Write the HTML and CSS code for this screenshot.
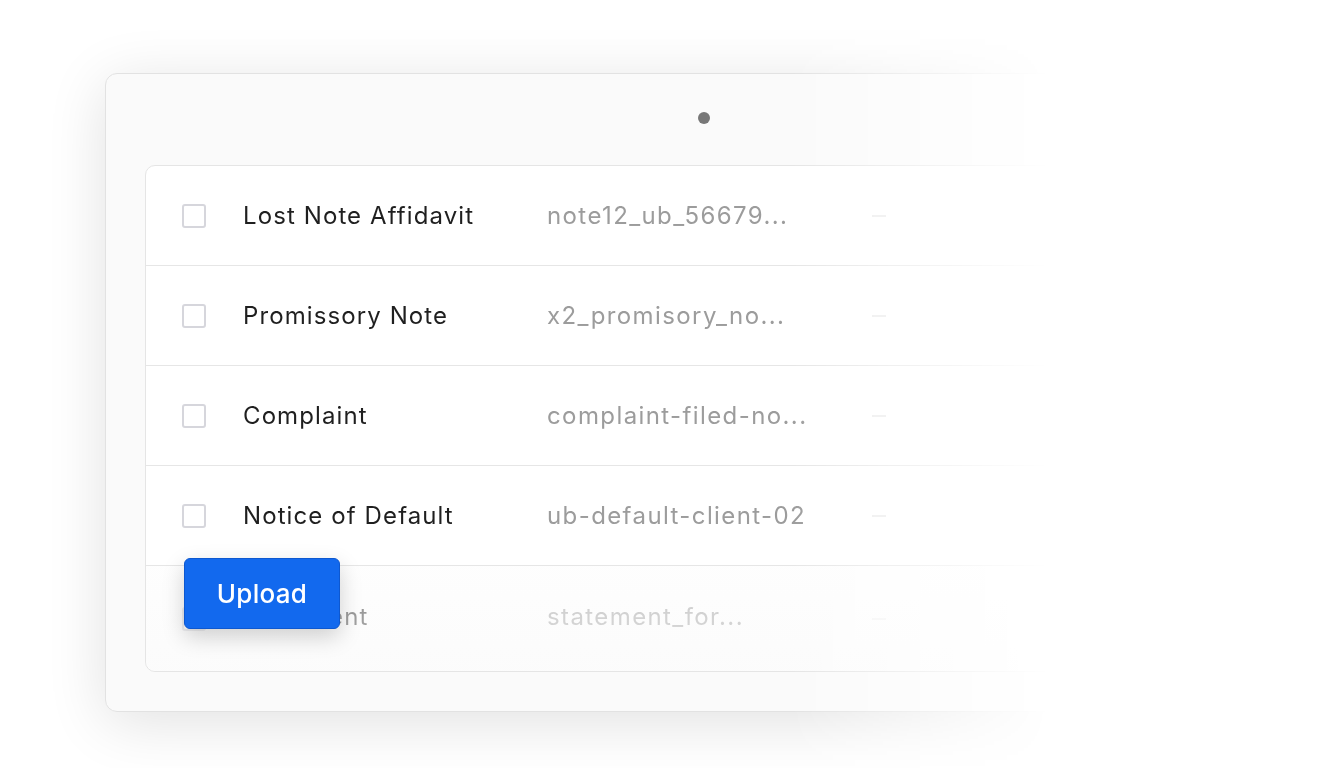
FILE: index.html
```
<!DOCTYPE html>
<html lang="en">
<head>
<meta charset="utf-8">
<title>Documents</title>
<link rel="stylesheet" href="styles.css">
</head>
<body>
<div class="stage">
  <div class="frame">
    <div class="header"><span class="dot"></span></div>
    <div class="table">
      <div class="row">
        <span class="check"></span>
        <span class="title">Lost Note Affidavit</span>
        <span class="file">note12_ub_56679...</span>
        <span class="dash"></span>
      </div>
      <div class="row">
        <span class="check"></span>
        <span class="title">Promissory Note</span>
        <span class="file">x2_promisory_no...</span>
        <span class="dash"></span>
      </div>
      <div class="row">
        <span class="check"></span>
        <span class="title">Complaint</span>
        <span class="file">complaint-filed-no...</span>
        <span class="dash"></span>
      </div>
      <div class="row">
        <span class="check"></span>
        <span class="title">Notice of Default</span>
        <span class="file">ub-default-client-02</span>
        <span class="dash"></span>
      </div>
      <div class="row row-last">
        <span class="check"></span>
        <span class="title">Statement</span>
        <span class="file">statement_for...</span>
        <span class="dash"></span>
      </div>
      <button class="upload">Upload</button>
    </div>
  </div>
</div>
</body>
</html>
```
FILE: styles.css
```
html, body {
  margin: 0;
  padding: 0;
  background: #ffffff;
}
body {
  width: 1328px;
  height: 768px;
  overflow: hidden;
  font-family: "Inter", "Noto Sans", sans-serif;
}
.stage {
  padding: 73px 0 0 105px;
  height: 768px;
  box-sizing: border-box;
  -webkit-mask-image: linear-gradient(to right, #000 0px, #000 790px, transparent 1050px);
  mask-image: linear-gradient(to right, #000 0px, #000 790px, transparent 1050px);
}
.frame {
  width: 1198px;
  box-sizing: border-box;
  background: #fafafa;
  border: 1px solid #e2e2e2;
  border-radius: 12px;
  padding: 0 40px 39px 39px;
  box-shadow: 0 10px 60px rgba(0, 0, 0, 0.12);
}
.header {
  height: 91px;
  display: flex;
  justify-content: center;
  align-items: center;
}
.dot {
  width: 12px;
  height: 12px;
  border-radius: 50%;
  background: #777777;
  margin-top: -4px;
}
.table {
  position: relative;
  background: #ffffff;
  border: 1px solid #e5e5e5;
  border-radius: 10px;
}
.row {
  position: relative;
  display: flex;
  align-items: center;
  height: 99px;
  border-bottom: 1px solid #e6e6e6;
  padding-left: 36px;
}
.row-last {
  height: 105px;
  border-bottom: none;
}
.row-last .title,
.row-last .file {
  margin-top: -4px;
}
.row-last::after {
  content: "";
  position: absolute;
  left: 0;
  right: 0;
  top: 0;
  bottom: 0;
  border-radius: 0 0 10px 10px;
  background: linear-gradient(to bottom, rgba(252, 252, 252, 0.45), rgba(250, 250, 250, 0.7));
}
.check {
  width: 20px;
  height: 20px;
  border: 2px solid #d6d6dc;
  border-radius: 3px;
  flex: none;
}
.title {
  margin-left: 37px;
  width: 304px;
  flex: none;
  font-size: 24px;
  color: #1f1f1f;
  letter-spacing: 1.1px;
}
.file {
  width: 325px;
  flex: none;
  font-size: 24px;
  color: #9c9c9c;
  letter-spacing: 1.4px;
}
.dash {
  width: 14px;
  height: 2px;
  background: #ebebeb;
  flex: none;
}
.upload {
  position: absolute;
  left: 38px;
  top: 392px;
  z-index: 2;
  width: 156px;
  height: 71px;
  box-sizing: border-box;
  background: #1269ee;
  border: 1px solid #0d58d0;
  border-radius: 6px;
  color: #ffffff;
  font-family: "Inter", "Noto Sans", sans-serif;
  font-size: 26px;
  font-weight: 500;
  letter-spacing: 0.3px;
  padding: 0;
  box-shadow: 0 8px 22px rgba(0, 0, 0, 0.18);
}
```
